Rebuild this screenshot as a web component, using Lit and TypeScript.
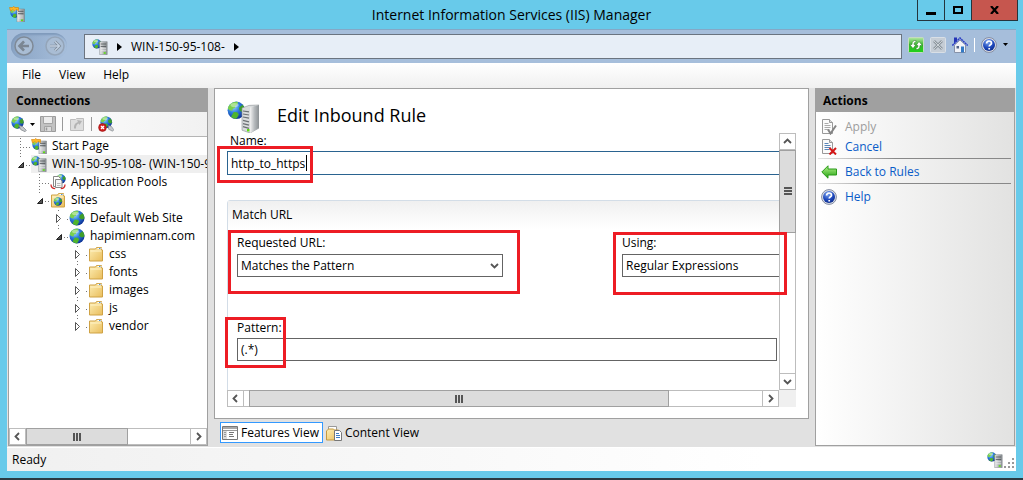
import { LitElement, html, css, svg, nothing } from "lit";
import { customElement } from "lit/decorators.js";
import { styleMap } from "lit/directives/style-map.js";
import { classMap } from "lit/directives/class-map.js";

const defs = svg`
  <defs>
    <radialGradient id="sea" cx="35%" cy="30%" r="75%">
      <stop offset="0" stop-color="#9fd8ff"/><stop offset=".45" stop-color="#2f7fe0"/><stop offset="1" stop-color="#0b2f93"/>
    </radialGradient>
    <linearGradient id="steel" x1="0" x2="1"><stop offset="0" stop-color="#f2f2f2"/><stop offset=".5" stop-color="#b5b9bc"/><stop offset="1" stop-color="#8c9194"/></linearGradient>
    <linearGradient id="manila" x1="0" y1="0" x2="1" y2="1"><stop offset="0" stop-color="#fdeeb4"/><stop offset="1" stop-color="#e9bd5c"/></linearGradient>
    <linearGradient id="leaf" x1="0" y1="0" x2="0" y2="1"><stop offset="0" stop-color="#b6f58a"/><stop offset="1" stop-color="#22a012"/></linearGradient>
    <linearGradient id="go" x1="0" y1="0" x2="0" y2="1"><stop offset="0" stop-color="#b5e8a4"/><stop offset=".5" stop-color="#35b52c"/><stop offset="1" stop-color="#1fd319"/></linearGradient>
    <radialGradient id="blueball" cx="40%" cy="25%" r="80%"><stop offset="0" stop-color="#7fa6ee"/><stop offset=".6" stop-color="#1d48bd"/><stop offset="1" stop-color="#0d2a86"/></radialGradient>
  </defs>`;

// Globe on a 16-unit square.
const globeShape = svg`
  <circle cx="8" cy="8" r="7.5" fill="url(#sea)"/>
  <path d="M3 2.6C5 .8 8 .4 9.5 1L9 3 7.2 4.2 7 6 5 6.6 4.6 8.4 2 8 .7 6.500C1 5 1.800 3.600 3 2.600z" fill="#7ad04e"/>
  <path d="M10.500 5.500l3-2.300c1.400 1.600 2 3.300 1.900 5.300L13 9.500l-1.700-.8-1-1.500z" fill="#3f9e2a"/>
  <path d="M5.800 9.500l3 .3 1.400 1.800-1 2L8 15.400C6.300 15.300 4.500 14.600 3.500 13.500z" fill="#4fb52c"/>
  <ellipse cx="6.500" cy="3.500" rx="3.500" ry="1.800" fill="#fff" opacity=".4"/>`;

const serverShape = svg`
  <path d="M8 3h7.500v13H8z" fill="url(#steel)" stroke="#777c80" stroke-width=".5"/>
  <path d="M9 5.300h5.500M9 7.700h5.500" stroke="#44494d" stroke-width=".8"/>
  <path d="M9 10h5.500M9 12h5.500" stroke="#f4f4f4" stroke-width=".6"/>
  <rect x="12" y="13.500" width="2" height="1.600" fill="#5ce010"/>`;

const folderShape = svg`
  <path d="M1.500 3h6l1-1.500h5V4h1v11h-13z" fill="url(#manila)" stroke="#cfa244" stroke-width="1"/>
  <path d="M9.500 2.500h4" stroke="#fff" stroke-width="1.200"/><rect x="11" y="2" width="1.500" height="1" fill="#4a90d9"/>
  <path d="M2.500 5h11" stroke="#fff3c8"/>`;

const helpShape = svg`
  <circle cx="8" cy="8" r="7.400" fill="#dfe3ea" stroke="#8189a0"/>
  <circle cx="8" cy="8" r="6" fill="url(#blueball)"/>
  <path d="M5.600 6.500c0-3.300 4.900-3.300 4.900-.3 0 1.600-2.300 1.500-2.300 3.400M8.200 11v1.600" fill="none" stroke="#fff" stroke-width="1.700"/>`;

const pageShape = (line: string) => svg`
  <path d="M1.500.5h7l3 3v11h-10z" fill="#fbfbfb" stroke="#999"/>
  <path d="M8.500.5v3h3" fill="#ddd" stroke="#999"/>
  <path d="M3.500 4.500h4M3.500 6.500h6M3.500 8.500h6M3.500 10.500h5" stroke=${line}/>`;

const glyphs: Record<string, unknown> = {
  globe: globeShape,
  folder: folderShape,
  help: helpShape,
  server: svg`<g transform="scale(.62)">${globeShape}</g><g transform="translate(-.3 -.3)">${serverShape}</g>`,
  largeServer: svg`<g transform="scale(.58)">${globeShape}</g>
    <path d="M7.500 3.500L11 2.200 16 2v11.500L11.500 16 7.500 14.600z" fill="#d9dcdd" stroke="#8c9193" stroke-width=".3"/>
    <path d="M11.500 3.300L16 2v11.500L11.500 16z" fill="url(#steel)"/>
    <path d="M8 5l3 .4M8 6.500l3 .5M8 8l3 .6M8 9.700l3 .7M8 11.300l3 .8M8 12.800l3 .9" stroke="#6c7174" stroke-width=".6"/>
    <rect x="10" y="14" width="1.200" height="1.200" fill="#5ce010"/>`,
  start: svg`<g transform="translate(1 1.500) scale(.66)">${globeShape}</g>${serverShape}
    <path d="M.5 1.500h3l1-1 1.500 1h3.500v3L7 3.500 5.500 5 3.800 3.600 1.500 5z" fill="#ffb524" stroke="#d98200" stroke-width=".6"/>`,
  connect: svg`<g transform="scale(.82)">${globeShape}</g>
    <path d="M8 9.500l3.500 1 3.800 3.800-1.200 1.400-4.300-2z" fill="#c4c8cb" stroke="#7b8084" stroke-width=".7"/>`,
  disconnect: svg`<g transform="translate(2 0) scale(.78)">${globeShape}</g>
    <path d="M10.500 9.500l3 1 2.300 3.300-1.200 1.400-4-2z" fill="#c4c8cb" stroke="#7b8084" stroke-width=".6"/>
    <circle cx="4.500" cy="11.500" r="3.900" fill="#d41f1f" stroke="#8e0f0f" stroke-width=".6"/>
    <path d="M3 10l3 3m0-3l-3 3" stroke="#fff" stroke-width="1.400"/>`,
  save: svg`<path d="M.5.500h15v15h-15z" fill="#c2c2c2" stroke="#9b9b9b"/><path d="M3.500.500h9v7h-9z" fill="#ececec" stroke="#a4a4a4"/>
    <path d="M4.500 10.500h7v5h-7z" fill="#dcdcdc" stroke="#a4a4a4"/><path d="M6.500 11.500v3" stroke="#999" stroke-width="1.500"/>`,
  up: svg`<path d="M1.500 3.500h5l1-1h7v12h-13z" fill="#dedede" stroke="#bdbdbd"/><path d="M5 12.500c0-4 1-5.500 4-6.500l-1-2 5 1-2.500 4-.8-1.500C7.500 8.500 7 10 7 12.500z" fill="#b4b4b4"/>`,
  pools: svg`<g transform="translate(6 0) scale(.62)">${globeShape}</g>
    <path d="M3.500 2.500h5l2 2v8h-7z" fill="#fff" stroke="#888"/><path d="M5.500 5.500h5l1.500 1.500v6.500h-6.500z" fill="#f6f6f6" stroke="#888"/>
    <path d="M1 10.500c0 2.500 1.500 4 4.200 4.200M15 10.500c0 2.500-1.500 4-4.200 4.200" fill="none" stroke="#cf2b2b" stroke-width="1.300"/>
    <path d="M7 9.500h3.500M7 11.500h3.500" stroke="#bbb"/>`,
  sites: svg`${folderShape}<g transform="translate(3.500 5) scale(.56)">${globeShape}</g>`,
  refresh: svg`<rect x=".5" y=".5" width="15" height="15" rx="1" fill="url(#go)" stroke="#c5dcc0"/>
    <path d="M8 3.500C5.500 3.200 4 4.500 4 7.500H1.700L5 11.500l3-4H6C6 6 6.500 5 8 5zM8 12.500c2.500.3 4-1 4-4h2.300L11 4.500l-3 4h2c0 1.500-.5 2.500-2 2.500z" fill="#fff" stroke="#257a1d" stroke-width=".5"/>`,
  stop: svg`<rect x=".5" y=".5" width="15" height="15" rx="1" fill="#c5cdd6" stroke="#d9dfe6"/><path d="M4 4l8 8m0-8l-8 8" stroke="#8d979f" stroke-width="2.600"/><path d="M4 4l8 8m0-8l-8 8" stroke="#d4d9de" stroke-width=".9"/>`,
  home: svg`<path d="M2.500 8v7.500h11V8L8 3z" fill="#f1f3f8" stroke="#8792a8"/><path d="M.3 8.500L8 1l7.700 7.500" fill="none" stroke="#2d3fc4" stroke-width="1.500" stroke-dasharray="2 .5"/>
    <path d="M2 .5h3v3L2 6.300z" fill="#2433b5"/><rect x="9" y="9.500" width="3" height="6" fill="#3279c4"/><rect x="4.500" y="9" width="2.500" height="2.500" fill="#526588"/>`,
  apply: svg`${pageShape("#aaa")}<path d="M7 10.500l2.500 4L15 6.500" fill="none" stroke="#858585" stroke-width="2"/>`,
  cancel: svg`${pageShape("#5b86b8")}<path d="M8.500 9l6.500 6.500M15 9l-6.500 6.500" stroke="#d41717" stroke-width="2"/>`,
  back: svg`<path d="M.8 8L7 1.800V5h8.500v6H7v3.200z" fill="url(#leaf)" stroke="#2b9a1a"/>`,
  features: svg`<path d="M.5 1.500h15v13h-15z" fill="#fff" stroke="#777"/><path d="M1 2h14v2H1z" fill="#a9a9a9"/><path d="M1 5.500h14" stroke="#999"/>
    <path d="M1 6h4v8H1z" fill="#dcdcdc"/><path d="M2 7.500h2M2 9.500h2M2 11.500h2" stroke="#999"/><path d="M7 7.500h5M7 9.500h4M7 11.500h5" stroke="#777"/>`,
  content: svg`<path d="M2.500 1.500h8v5h-8z" fill="#fff" stroke="#999"/><path d="M.5 6l2-2h5l1 1h4v10H.5z" fill="url(#manila)" stroke="#c39a42"/>
    <path d="M8.500 5.500h5l2 2v8h-7z" fill="#fff" stroke="#777"/><path d="M10 8.500h3M10 10.500h4M10 12.500h4" stroke="#3c7cc4"/>`,
};

const icon = (name: string, size = 16) =>
  html`<svg class="icon" width=${size} height=${size} viewBox="0 0 16 16" aria-hidden="true">${defs}${glyphs[name]}</svg>`;

const chevrons: Record<string, string> = {
  left: "M6 1L2.500 4.500 6 8",
  right: "M3 1l3.500 3.500L3 8",
  up: "M1 6l3.500-3.500L8 6",
  down: "M1 3l3.500 3.500L8 3",
};
const chevron = (dir: string) =>
  html`<svg class="icon" width="9" height="9" viewBox="0 0 9 9" aria-hidden="true"><path d=${chevrons[dir]} fill="none" stroke="#555" stroke-width="1.800"/></svg>`;

const iconStyles = css`
  * { box-sizing: border-box; }
  .icon { display: block; flex: none; }
  button { font: inherit; color: inherit; border: 0; padding: 0; background: none; }
  a { text-decoration: none; color: inherit; }
`;

@customElement("scroll-bar")
class ScrollBar extends LitElement {
  static properties = { vertical: { type: Boolean, reflect: true }, start: { type: Number }, size: { type: Number } };
  declare vertical: boolean;
  declare start: number;
  declare size: number;
  static styles = [iconStyles, css`
    :host { display: flex; height: 17px; background: #fff; border: 1px solid #bdbdbd; }
    :host([vertical]) { flex-direction: column; width: 17px; height: auto; min-height: 0; }
    .arrow { flex: 0 0 16px; display: grid; place-items: center; background: #fff; border: solid #bdbdbd; border-width: 0 1px 0 0; }
    .arrow.end { border-width: 0 0 0 1px; }
    .track { flex: 1; display: flex; min-width: 0; min-height: 0; }
    .thumb { background: #dcdcdc; border: 1px solid #a0a0a0; margin: -1px 0; display: grid; place-items: center; }
    :host([vertical]) .arrow { border-width: 0 0 1px 0; }
    :host([vertical]) .arrow.end { border-width: 1px 0 0 0; }
    :host([vertical]) .track { flex-direction: column; }
    :host([vertical]) .thumb { margin: 0 -1px; }
  `];
  render() {
    const v = this.vertical;
    const grip = v ? "M0 1h8M0 4h8M0 7h8" : "M1 0v8M4 0v8M7 0v8";
    const box = v
      ? { marginTop: this.start + "%", height: this.size + "%" }
      : { marginLeft: this.start + "%", width: this.size + "%" };
    return html`
      <button class="arrow" aria-label=${v ? "Scroll up" : "Scroll left"}>${chevron(v ? "up" : "left")}</button>
      <div class="track"><div class="thumb" style=${styleMap(box)}>
        <svg class="icon" width="8" height="8" aria-hidden="true"><path d=${grip} stroke="#555" stroke-width="2"/></svg>
      </div></div>
      <button class="arrow end" aria-label=${v ? "Scroll down" : "Scroll right"}>${chevron(v ? "down" : "right")}</button>`;
  }
}

interface Node { text: string; icon: string; level: number; state: "open" | "closed" | "leaf"; selected?: boolean; last?: boolean; }

const nodes: Node[] = [
  { text: "Start Page", icon: "start", level: 0, state: "leaf" },
  { text: "WIN-150-95-108- (WIN-150-95-108-\\Administrator)", icon: "server", level: 0, state: "open", selected: true, last: true },
  { text: "Application Pools", icon: "pools", level: 1, state: "leaf" },
  { text: "Sites", icon: "sites", level: 1, state: "open", last: true },
  { text: "Default Web Site", icon: "globe", level: 2, state: "closed" },
  { text: "hapimiennam.com", icon: "globe", level: 2, state: "open", last: true },
  { text: "css", icon: "folder", level: 3, state: "closed" },
  { text: "fonts", icon: "folder", level: 3, state: "closed" },
  { text: "images", icon: "folder", level: 3, state: "closed" },
  { text: "js", icon: "folder", level: 3, state: "closed" },
  { text: "vendor", icon: "folder", level: 3, state: "closed", last: true },
];

@customElement("connections-pane")
class ConnectionsPane extends LitElement {
  static styles = [iconStyles, css`
    :host { display: flex; flex-direction: column; min-width: 0; min-height: 0; border: 1px solid #a0a0a0; background: #fff; }
    h2 { margin: 0; padding-left: 7px; font-size: 12px; line-height: 23px; background: #a0a0a0; color: #000; }
    .tools { display: flex; align-items: center; gap: 5px; height: 25px; padding-left: 2px; border-bottom: 1px solid #b5b5b5; background: linear-gradient(90deg, #fff, #f1f1f1); }
    .tools button { display: flex; align-items: center; gap: 3px; }
    .sep { width: 1px; height: 14px; margin: 0 1px; background: #999; }
    ul { list-style: none; margin: 0; padding: 0; flex: 1; min-height: 0; overflow: hidden; }
    li { display: flex; height: 18px; padding-left: 7px; white-space: nowrap; line-height: 18px; }
    .indent { flex: none; width: 19px; }
    .label { display: flex; flex: none; align-items: center; gap: 5px; }
    .selected { background: #efefef; flex: 1 0 auto; }
    scroll-bar { flex: none; }
  `];
  branch(n: Node) {
    return html`<svg class="icon" width="15" height="18" aria-hidden="true">
      <path d=${(n.last ? "M4.500 1V9" : "M4.500 1V18") + "M4 10.500H15"} stroke="#777" stroke-dasharray="1 2" fill="none"/>
      ${n.state === "open" ? svg`<path d="M0 3h10v12H0z" fill="#fff"/><path d="M2.500 12.500h5v-5z" fill="#555" stroke="#222"/>` : nothing}
      ${n.state === "closed" ? svg`<path d="M1 3h10v13H1z" fill="#fff"/><path d="M2.500 5.500v8l4-4z" fill="#fff" stroke="#555"/>` : nothing}
    </svg>`;
  }
  render() {
    return html`
      <h2>Connections</h2>
      <div class="tools">
        <button aria-label="Connect">${icon("connect")}<svg class="icon" width="5" height="3"><path d="M0 0h5L2.500 3z"/></svg></button>
        <button aria-label="Save" disabled>${icon("save")}</button><span class="sep"></span>
        <button aria-label="Up" disabled>${icon("up")}</button><span class="sep"></span>
        <button aria-label="Disconnect">${icon("disconnect")}</button>
      </div>
      <ul>
        ${nodes.map((n) => html`<li>
          ${Array.from({ length: n.level }, () => html`<span class="indent"></span>`)}
          ${this.branch(n)}
          <a href="#" class=${classMap({ label: true, selected: !!n.selected })}>${icon(n.icon)}<span>${n.text}</span></a>
        </li>`)}
      </ul>
      <scroll-bar start="0" size="62"></scroll-bar>`;
  }
}

@customElement("rule-editor")
class RuleEditor extends LitElement {
  static styles = [iconStyles, css`
    :host { display: grid; grid-template-columns: minmax(0, 1fr) 17px; grid-template-rows: 44px minmax(0, 1fr) 17px; position: relative; min-height: 0; padding: 0 12px 11px; background: #fff; border: 1px solid #a0a0a0; }
    header { grid-column: 1 / 3; display: flex; align-items: flex-end; gap: 18px; }
    h1 { margin: 0; font-size: 18px; font-weight: 400; line-height: 36px; }
    .view { overflow: hidden; }
    .content { min-width: 677px; }
    label { display: block; line-height: 16px; padding-left: 3px; }
    input, select { display: block; width: 100%; height: 23px; margin: 0; padding: 0 3px; font: inherit; color: #000; background: #fff; border: 1px solid #646464; border-radius: 0; appearance: none; outline: 0; }
    .name input { margin-top: 2px; height: 24px; border-color: #2a6390; }
    fieldset { margin: 25px 0 0; padding: 0 9px; border: 1px solid #d3dde7; border-radius: 3px; min-width: 0; height: 240px; }
    legend { float: left; width: calc(100% + 18px); margin: 0 -9px; padding: 0 4px; line-height: 28px; background: linear-gradient(#f0f0f0, #fff); }
    .row { clear: both; display: grid; grid-template-columns: 266px 266px; gap: 119px; padding-top: 6px; }
    .row label, .pattern label { padding-left: 0; }
    .row label { margin-bottom: 3px; }
    .pattern { width: 540px; padding-top: 43px; }
    .pattern label { margin-bottom: 2px; }
    .drop { display: grid; align-items: center; }
    .drop > * { grid-area: 1 / 1; }
    .drop .icon { justify-self: end; margin-right: 4px; pointer-events: none; }
    .corner { background: #f0f0f0; }
    .mark { position: absolute; border: 3px solid #ed1c24; pointer-events: none; }
    .m-name { left: 2px; top: 57px; width: 96px; height: 37px; }
    .m-url { left: 13px; top: 141px; width: 292px; height: 64px; }
    .m-using { left: 398px; top: 143px; width: 174px; height: 63px; }
    .m-pattern { left: 10px; top: 228px; width: 61px; height: 51px; }
    .caret { position: absolute; left: 91px; top: 66px; width: 1px; height: 16px; background: #000; }
  `];
  render() {
    return html`
      <header>${icon("largeServer", 32)}<h1>Edit Inbound Rule</h1></header>
      <div class="view"><form class="content">
        <div class="name"><label for="name">Name:</label><input id="name" value="http_to_https"></div>
        <fieldset>
          <legend>Match URL</legend>
          <div class="row">
            <div><label for="url">Requested URL:</label>
              <div class="drop"><select id="url"><option>Matches the Pattern</option></select>${chevron("down")}</div></div>
            <div><label for="using">Using:</label>
              <div class="drop"><select id="using"><option>Regular Expressions</option></select>${chevron("down")}</div></div>
          </div>
          <div class="pattern"><label for="pattern">Pattern:</label><input id="pattern" value="(.*)"></div>
        </fieldset>
      </form></div>
      <scroll-bar vertical start="0" size="37"></scroll-bar>
      <scroll-bar start="1" size="81"></scroll-bar>
      <div class="corner"></div>
      <div class="caret"></div>
      <div class="mark m-name"></div><div class="mark m-url"></div>
      <div class="mark m-using"></div><div class="mark m-pattern"></div>`;
  }
}

@customElement("actions-pane")
class ActionsPane extends LitElement {
  static styles = [iconStyles, css`
    :host { display: block; border: 1px solid #a0a0a0; background: linear-gradient(90deg, #fff, #e2e2e1); }
    h2 { margin: 0; padding-left: 7px; font-size: 12px; line-height: 23px; background: #a0a0a0; color: #000; }
    nav { padding: 5px 3px 0 2px; }
    .item { display: flex; align-items: center; gap: 8px; height: 20px; padding-left: 3px; color: #0a5cc8; }
    .item:disabled { color: #9d9d9d; }
    .sep { height: 1px; margin: 1px 0 3px; background: linear-gradient(90deg, #e4e4e4, #888 40%); }
  `];
  render() {
    return html`
      <h2>Actions</h2>
      <nav>
        <button class="item" disabled>${icon("apply")}Apply</button>
        <a class="item" href="#">${icon("cancel")}Cancel</a>
        <div class="sep"></div>
        <a class="item" href="#">${icon("back")}Back to Rules</a>
        <div class="sep"></div>
        <a class="item" href="#">${icon("help")}Help</a>
      </nav>`;
  }
}

@customElement("app-root")
class AppRoot extends LitElement {
  static styles = [iconStyles, css`
    :host { display: flex; flex-direction: column; box-sizing: border-box; height: 100vh; padding: 0 7px 7px; background: #68caea; border-bottom: 2px solid #2b3a42; color: #000; font: 12px/16px "Open Sans", "Noto Sans", sans-serif; }
    .title { display: grid; grid-template-columns: 132px 1fr 132px; height: 29px; flex: none; }
    .title .app { padding: 6px 0 0 2px; }
    .title h1 { margin: 0; font-size: 14px; font-weight: 400; line-height: 29px; text-align: center; }
    .controls { display: flex; justify-self: end; height: 21px; margin-right: -2px; border: 1px solid #24343c; border-top: 0; }
    .controls button { width: 27px; display: grid; place-items: center; border-right: 1px solid #24343c; }
    .controls .close { width: 45px; background: #c6564e; border: 0; }
    .address { display: flex; flex: none; align-items: center; height: 34px; padding: 0 8px 0 4px; background: #a6bedb; border-top: 1px solid #84a8c6; }
    .history { display: flex; align-items: center; gap: 11px; width: 56px; height: 26px; padding: 0 3px; margin-bottom: 2px; border-radius: 13px; background: linear-gradient(90deg, #8aa4c4, #a6bedb); box-shadow: inset 1px 2px 2px #7f9abb; }
    .path { flex: 1; display: flex; align-items: center; height: 25px; margin: 0 6px 0 17px; padding: 0 7px; gap: 9px; background: #e7eef7; border: 1px solid #6b7480; }
    .bar { display: flex; align-items: center; gap: 6px; padding-bottom: 4px; }
    .bar .sep { width: 1px; height: 14px; background: #fff; }
    .menu { display: flex; flex: none; gap: 18px; height: 25px; padding: 0 15px 2px; align-items: center; background: linear-gradient(#fff, #f0f0f0); }
    .main { flex: 1; min-height: 0; display: grid; grid-template-columns: 200px minmax(0, 1fr) 200px; grid-template-rows: minmax(0, 1fr); gap: 6px; padding: 0 1px 1px; background: #e1e1e1; }
    .center { display: flex; flex-direction: column; min-width: 0; min-height: 0; }
    rule-editor { flex: 1; }
    .views { display: flex; flex: none; gap: 1px; height: 27px; padding: 3px 6px; }
    .views button { display: flex; align-items: center; gap: 3px; height: 21px; padding: 0 3px 0 1px; border: 1px solid transparent; }
    .views .on { background: #fff; border-color: #3399ff; }
    .status { display: flex; flex: none; align-items: center; justify-content: space-between; height: 24px; padding: 0 2px 0 5px; border-top: 1px solid #fff; background: linear-gradient(90deg, #f0f0f0, #fff 75%); }
    .grip { display: flex; align-items: flex-end; gap: 1px; }
  `];
  render() {
    const arrow = html`<svg class="icon" width="5" height="8"><path d="M0 0v8l5-4z"/></svg>`;
    const round = (label: string, d: string, ring: string, inner: string) => html`<button aria-label=${label}><svg class="icon" width="20" height="20" viewBox="0 0 20 20">
      <circle cx="10" cy="10" r="9" fill="#a9bdd4" stroke=${ring} stroke-width="1.500"/>
      <path d=${d} fill="none" stroke="#7c8793" stroke-width="2.600"/><path d=${d} fill="none" stroke=${inner} stroke-width="1.300"/></svg></button>`;
    return html`
      <div class="title">
        <div class="app">${icon("start")}</div>
        <h1>Internet Information Services (IIS) Manager</h1>
        <div class="controls">
          <button aria-label="Minimize"><svg class="icon" width="10" height="9"><path d="M0 6h10v3H0z"/></svg></button>
          <button aria-label="Maximize"><svg class="icon" width="10" height="8"><path d="M1 1h8v6H1z" fill="none" stroke="#000" stroke-width="2"/></svg></button>
          <button class="close" aria-label="Close"><svg class="icon" width="9" height="8"><path d="M1 0l7 8M8 0L1 8" stroke="#000" stroke-width="2.200"/></svg></button>
        </div>
      </div>
      <div class="address">
        <div class="history">${round("Back", "M15 10H6M10 5.500L5.500 10l4.500 4.500", "#7f8a97", "#7c8793")}${round("Forward", "M5 10h9M10 5.500l4.500 4.500-4.500 4.500", "#94a5b9", "#c3d2e4")}</div>
        <div class="path">${icon("server")}${arrow}<span>WIN-150-95-108-</span>${arrow}</div>
        <div class="bar">
          <button aria-label="Refresh">${icon("refresh")}</button>
          <button aria-label="Stop" disabled>${icon("stop")}</button>
          <button aria-label="Home">${icon("home")}</button>
          <span class="sep"></span>
          <button aria-label="Help">${icon("help")}</button>
          <svg class="icon" width="5" height="3"><path d="M0 0h5L2.500 3z"/></svg>
        </div>
      </div>
      <nav class="menu"><a href="#">File</a><a href="#">View</a><a href="#">Help</a></nav>
      <div class="main">
        <connections-pane></connections-pane>
        <div class="center">
          <rule-editor></rule-editor>
          <div class="views">
            <button class="on">${icon("features")}Features View</button>
            <button>${icon("content")}Content View</button>
          </div>
        </div>
        <actions-pane></actions-pane>
      </div>
      <div class="status"><span>Ready</span>
        <span class="grip">${icon("server")}<svg class="icon" width="10" height="10"><path d="M8 0h2v2H8zM4 4h2v2H4zM8 4h2v2H8zM0 8h2v2H0zM4 8h2v2H4zM8 8h2v2H8z" fill="#999"/></svg></span>
      </div>`;
  }
}
